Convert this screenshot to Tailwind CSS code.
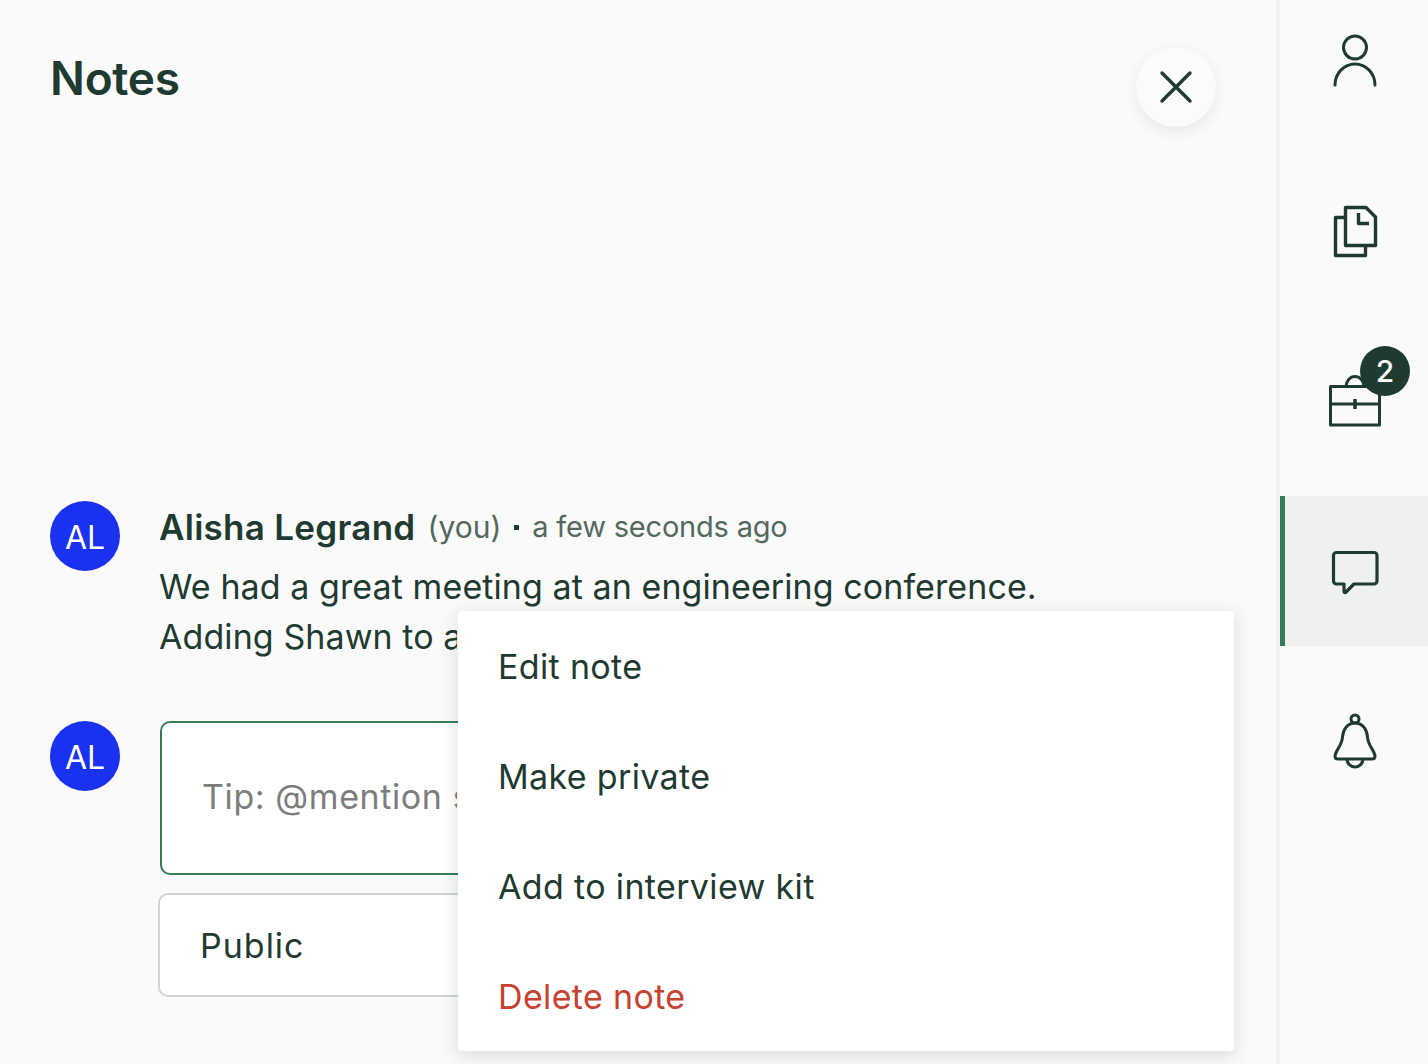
<!DOCTYPE html>
<html lang="en">
<head>
    <meta charset="UTF-8">
    <meta name="viewport" content="width=device-width, initial-scale=1.0">
    <title>Notes</title>
    <script src="https://cdn.jsdelivr.net/npm/@tailwindcss/browser@4"></script>
</head>
<body class="bg-[#fafafa] text-[#1f3a30] font-['Inter',sans-serif] overflow-hidden">
<div class="flex h-[1064px] w-[1428px] overflow-hidden">

    <!-- notes panel -->
    <main class="relative w-[1276px] shrink-0 pl-[50px]">
        <header class="flex h-[501px] items-start justify-between pr-[60px]">
            <h1 class="mt-[50px] text-[46px] leading-[56px] font-semibold tracking-[-0.3px]">Notes</h1>
            <button class="mt-[47px] flex h-[80px] w-[80px] items-center justify-center rounded-full bg-[#fbfbfb] shadow-[0_4px_14px_rgba(31,58,48,0.09)]">
                <svg width="34" height="34" viewBox="0 0 34 34" fill="none" stroke="#1f3a30" stroke-width="3.4" stroke-linecap="round"><path d="M3 3 L31 31 M31 3 L3 31"/></svg>
            </button>
        </header>

        <section class="flex h-[220px] items-start gap-[40px]">
            <div class="flex h-[70px] w-[70px] shrink-0 items-center justify-center rounded-full bg-[#1a32f0] pt-[4px] text-[32px] text-white">AL</div>
            <div>
                <div class="-ml-px flex h-[52px] items-center whitespace-nowrap">
                    <span class="text-[35px] font-semibold tracking-[0.27px]">Alisha Legrand</span>
                    <span class="ml-[12px] text-[30px] text-[#53695f]">(you)</span>
                    <span class="mx-[13px] h-[5px] w-[5px] bg-[#1f3a30]"></span>
                    <span class="text-[29px] tracking-[-0.2px] text-[#53695f]">a few seconds ago</span>
                </div>
                <p class="mt-[9px] -ml-px whitespace-nowrap text-[34px] leading-[50px] tracking-[0.08px]">We had a great meeting at an engineering conference.</p>
                <p class="-ml-px w-[298px] overflow-hidden whitespace-nowrap text-[34px] leading-[50px] tracking-[0.08px]">Adding Shawn to a shortlist.</p>
            </div>
        </section>

        <section class="flex items-start gap-[40px]">
            <div class="flex h-[70px] w-[70px] shrink-0 items-center justify-center rounded-full bg-[#1a32f0] pt-[4px] text-[32px] text-white">AL</div>
            <div class="w-[1040px]">
                <div class="flex h-[154px] items-center rounded-[10px] border-2 border-[#367c5b] bg-white pl-[40px] pb-[4px] text-[#7d7d7d]">
                    <span class="w-[255px] overflow-hidden text-[34px] tracking-[0.6px] whitespace-nowrap">Tip: @mention someone</span>
                </div>
                <div class="mt-[18px] -ml-[2px] flex h-[104px] items-center rounded-[10px] border-2 border-[#d0d4d2] bg-white pt-[1px] pl-[40px] text-[34px] tracking-[1px]">Public</div>
            </div>
        </section>

        <!-- dropdown menu -->
        <ul class="absolute top-[611px] left-[458px] w-[776px] rounded-[4px] bg-white text-[34px] tracking-[0.35px] shadow-[0_4px_18px_rgba(31,58,48,0.16)]">
            <li class="flex h-[110px] items-center pl-[40px]">Edit note</li>
            <li class="flex h-[110px] items-center pl-[40px]">Make private</li>
            <li class="flex h-[110px] items-center pl-[40px]">Add to interview kit</li>
            <li class="flex h-[110px] items-center pl-[40px] text-[#c8402f]">Delete note</li>
        </ul>
    </main>

    <!-- right rail -->
    <aside class="w-[152px] shrink-0 border-l-4 border-[#f0f2f1]">
        <nav class="-mt-[14px] flex flex-col gap-[20px]">
            <a class="flex h-[150px] items-center justify-center pl-[1px]">
                <svg width="60" height="60" viewBox="0 0 60 59" fill="none" stroke="#1f3a30" stroke-width="3" stroke-linecap="round" stroke-linejoin="round"><circle cx="30" cy="16" r="11.5"/><path d="M10 53.5 A20 21 0 0 1 50 53.5"/></svg>
            </a>
            <a class="flex h-[150px] items-center justify-center pl-[1px]">
                <svg width="60" height="60" viewBox="0 0 60 60" fill="none" stroke="#1f3a30" stroke-width="3.4" stroke-linejoin="round"><path d="M20.5 6.5 H41 L50.5 16 V44.5 H20.5 Z"/><path d="M20.5 16.5 H10.5 V54.5 H40.5 V44.5"/><path d="M33.5 12 V22.5 H44"/></svg>
            </a>
            <a class="relative flex h-[150px] items-center justify-center pl-[1px]">
                <svg width="60" height="60" viewBox="0 0 60 60" fill="none" stroke="#1f3a30" stroke-width="3" stroke-linejoin="round"><rect x="5.5" y="15.5" width="49" height="38.5"/><path d="M5.5 33 H54.5"/><path d="M21 15.5 A9 10 0 0 1 39 15.5"/><path d="M30 28 V38" stroke-width="3.6"/></svg>
                <span class="absolute top-[20px] left-[80px] flex h-[50px] w-[50px] items-center justify-center rounded-full bg-[#1f3a30] text-[30px] font-medium text-white">2</span>
            </a>
            <a class="flex h-[150px] items-center justify-center border-l-[5px] border-[#367c5b] bg-[#eff1f0] pr-[4px]">
                <svg width="60" height="60" viewBox="0 0 60 60" fill="none" stroke="#1f3a30" stroke-width="3.2" stroke-linejoin="round"><path d="M11.5 11.5 H49 a3 3 0 0 1 3 3 V40 a3 3 0 0 1 -3 3 H29 L20.5 51.5 Q19 52 19 50 V43 H11.5 a3 3 0 0 1 -3 -3 V14.5 a3 3 0 0 1 3 -3 Z"/></svg>
            </a>
            <a class="flex h-[150px] items-center justify-center pl-[1px]">
                <svg width="60" height="60" viewBox="0 0 60 60" fill="none" stroke="#1f3a30" stroke-width="3" stroke-linejoin="round"><circle cx="30" cy="8" r="4"/><path d="M30 12 C22 12 18 19 17.5 26 C17 35 10.5 39 10 45 Q10 48 13 48 H47 Q50 48 50 45 C49.5 39 43 35 42.5 26 C42 19 38 12 30 12 Z"/><path d="M22 48 A8 8 0 0 0 38 48"/></svg>
            </a>
        </nav>
    </aside>
</div>
</body>
</html>
